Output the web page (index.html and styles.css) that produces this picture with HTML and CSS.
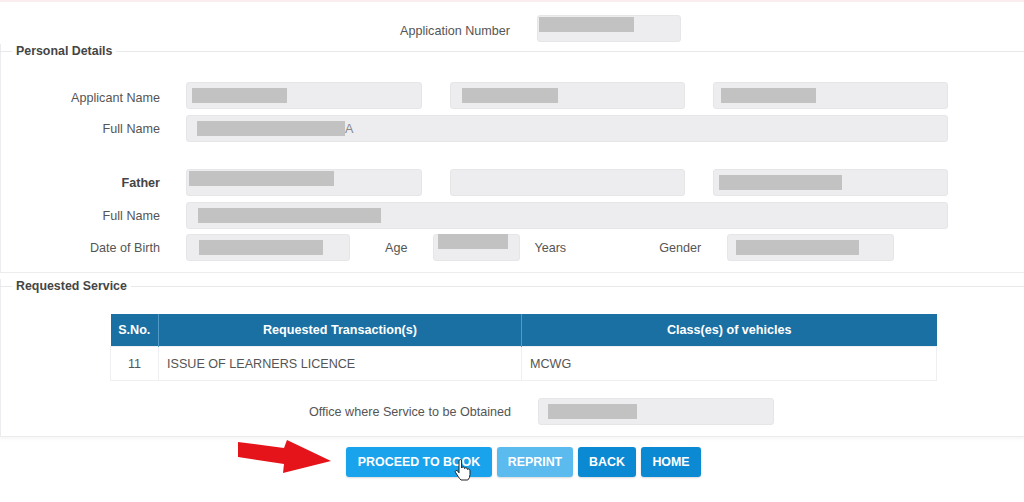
FILE: index.html
```html
<!DOCTYPE html>
<html>
<head>
<meta charset="utf-8">
<link rel="stylesheet" href="styles.css">
</head>
<body>
<div class="page">
  <div class="topline"></div>
  <div class="pair-row app-row">
    <label class="pair-label low">Application Number</label>
    <div class="field w-app"><span class="mask hi" style="margin-left:1px;width:95px"></span></div>
  </div>

  <section class="panel personal">
    <div class="legend"><span>Personal Details</span></div>
    <div class="row first">
      <label class="lbl low">Applicant Name</label>
      <div class="field w1"><span class="mask" style="margin-left:5px;width:95px"></span></div>
      <div class="field w2 gapc"><span class="mask" style="margin-left:11px;width:96px"></span></div>
      <div class="field w2 gapc"><span class="mask" style="margin-left:7px;width:95px"></span></div>
    </div>
    <div class="row">
      <label class="lbl">Full Name</label>
      <div class="field wfull"><span class="mask" style="margin-left:10px;width:148px"></span><span class="ghost">A</span></div>
    </div>
    <div class="row father">
      <label class="lbl bold">Father</label>
      <div class="field w1"><span class="mask hi" style="margin-left:2px;width:145px"></span></div>
      <div class="field w2 gapc"></div>
      <div class="field w2 gapc"><span class="mask" style="margin-left:5px;width:123px"></span></div>
    </div>
    <div class="row">
      <label class="lbl">Full Name</label>
      <div class="field wfull"><span class="mask" style="margin-left:11px;width:183px"></span></div>
    </div>
    <div class="row dob">
      <label class="lbl">Date of Birth</label>
      <div class="field w-dob"><span class="mask" style="margin-left:12px;width:124px"></span></div>
      <span class="inl age-l">Age</span>
      <div class="field w-age"><span class="mask top" style="margin-left:4px;width:70px"></span></div>
      <span class="inl years-l">Years</span>
      <span class="inl gender-l">Gender</span>
      <div class="field w-gender"><span class="mask" style="margin-left:8px;width:123px"></span></div>
    </div>
  </section>

  <section class="panel service">
    <div class="legend"><span>Requested Service</span></div>
    <table class="svc">
      <thead>
        <tr><th class="c-no">S.No.</th><th class="c-tr">Requested Transaction(s)</th><th class="c-cl">Class(es) of vehicles</th></tr>
      </thead>
      <tbody>
        <tr><td class="c-no">11</td><td>ISSUE OF LEARNERS LICENCE</td><td>MCWG</td></tr>
      </tbody>
    </table>
    <div class="pair-row office-row">
      <label class="pair-label">Office where Service to be Obtained</label>
      <div class="field w-office"><span class="mask" style="margin-left:9px;width:89px"></span></div>
    </div>
  </section>

  <div class="actions">
    <svg class="arrow" width="110" height="40" viewBox="0 0 110 40"><polygon points="2,5 48,11 51,3 95,24 47,36 48,27 2,20" fill="#e5141b"/></svg>
    <button class="btn proceed">PROCEED TO BOOK</button>
    <button class="btn reprint">REPRINT</button>
    <button class="btn dark">BACK</button>
    <button class="btn dark">HOME</button>
    <svg class="cursor" width="18" height="22" viewBox="0 0 18 22"><path d="M5 2 Q5 0.5 6.3 0.5 Q7.6 0.5 7.6 2 V9 Q8 7.8 9.3 7.9 Q10.5 8 10.5 9.5 Q11 8.6 12.2 8.8 Q13.3 9 13.3 10.4 Q13.8 9.7 14.8 10 Q16 10.3 16 11.8 V15.5 Q16 19 13.8 21 H7 Q5.6 19.8 4.2 17.6 L1.4 13.2 Q0.8 12 1.9 11.5 Q3 11.1 3.9 12.3 L5 13.8 Z" fill="#fff" stroke="#222" stroke-width="1"/></svg>
  </div>
</div>
</body>
</html>
```
FILE: styles.css
```css
html, body {
  margin: 0;
  padding: 0;
  background: #ffffff;
}
body {
  font-family: "Liberation Sans", Arial, sans-serif;
  font-size: 12.6px;
  color: #555;
  width: 1024px;
  height: 502px;
  overflow: hidden;
}
.page {
  position: relative;
  width: 1024px;
}
.topline {
  height: 2px;
  background: #fbecef;
}
.pair-row {
  display: flex;
  align-items: center;
}
.pair-label {
  width: 510px;
  text-align: right;
  margin-right: 27px;
  color: #555;
}
.low {
  padding-top: 4px;
}
.app-row {
  margin-top: 13px;
}
.field {
  box-sizing: border-box;
  height: 27px;
  background: #ededf0;
  border: 1px solid #e6e6e9;
  border-radius: 3px;
  display: flex;
  align-items: center;
}
.mask {
  display: inline-block;
  height: 15px;
  background: #c2c2c3;
  flex: none;
}
.mask.hi {
  align-self: flex-start;
  margin-top: 1px;
}
.mask.top {
  align-self: flex-start;
  margin-top: -1px;
}
.ghost {
  color: #888;
}
.w-app { width: 144px; }
.w-office { width: 236px; }

.panel {
  border: 1px solid #ececee;
  border-top: none;
  border-right: none;
}
.legend {
  display: flex;
  align-items: center;
  height: 14px;
  font-weight: bold;
  font-size: 12.4px;
  color: #454545;
}
.legend::before {
  content: "";
  width: 12px;
  height: 1px;
  background: #e8e8ea;
}
.legend::after {
  content: "";
  flex: 1;
  height: 1px;
  background: #e8e8ea;
}
.legend span {
  padding: 0 4px;
}
.personal {
  margin-top: 2px;
  padding-bottom: 11px;
}
.personal .legend,
.service .legend {
  margin-left: -1px;
}
.row {
  display: flex;
  align-items: center;
  margin-top: 6px;
}
.row.first {
  margin-top: 24px;
}
.row.father {
  margin-top: 27px;
}
.row.dob {
  margin-top: 5px;
}
.lbl {
  width: 159px;
  text-align: right;
  margin-right: 26px;
  color: #555;
}
.lbl.bold {
  font-weight: bold;
  color: #444;
}
.w1 { width: 236px; }
.w2 { width: 235px; }
.gapc { margin-left: 28px; }
.wfull { width: 762px; }
.w-dob { width: 164px; }
.w-age { width: 87px; margin-left: 26px; }
.w-gender { width: 167px; margin-left: 26px; }
.inl { color: #555; }
.age-l { margin-left: 35px; }
.years-l { margin-left: 14px; }
.gender-l { margin-left: 93px; }

.service {
  margin-top: 6px;
  padding-bottom: 11px;
  box-shadow: 0 2px 3px rgba(0, 0, 0, 0.04);
}
.svc {
  margin: 21px 0 0 109px;
  width: 827px;
  border-collapse: collapse;
}
.svc th {
  background: #1a70a3;
  color: #fff;
  font-weight: bold;
  height: 32px;
  padding: 0;
  border-left: 1px solid #4f9ac6;
  text-align: center;
}
.svc th:first-child {
  border-left: none;
}
.c-no { width: 47px; }
.c-tr { width: 362px; }
.svc td {
  height: 33px;
  padding: 0 0 0 8px;
  border: 1px solid #efeff1;
  color: #555;
}
.svc td.c-no {
  text-align: center;
  padding: 0;
}
.office-row {
  margin-top: 17px;
}

.actions {
  position: relative;
  display: flex;
  margin-top: 10px;
  padding-left: 346px;
  gap: 5px;
}
.btn {
  height: 30px;
  border: none;
  border-radius: 3px;
  color: #fff;
  font-family: "Liberation Sans", Arial, sans-serif;
  font-size: 12.4px;
  font-weight: bold;
  padding: 0;
  box-shadow: 0 1px 2px rgba(0, 0, 0, 0.15);
}
.proceed { width: 146px; background: #19a3ec; }
.reprint { width: 76px; background: #5bbaee; }
.dark { background: #0b8ad3; }
.dark:nth-of-type(3) { width: 58px; }
.dark:last-of-type { width: 60px; }
.arrow {
  position: absolute;
  left: 236px;
  top: -10px;
}
.cursor {
  position: absolute;
  left: 454px;
  top: 12px;
}
```
